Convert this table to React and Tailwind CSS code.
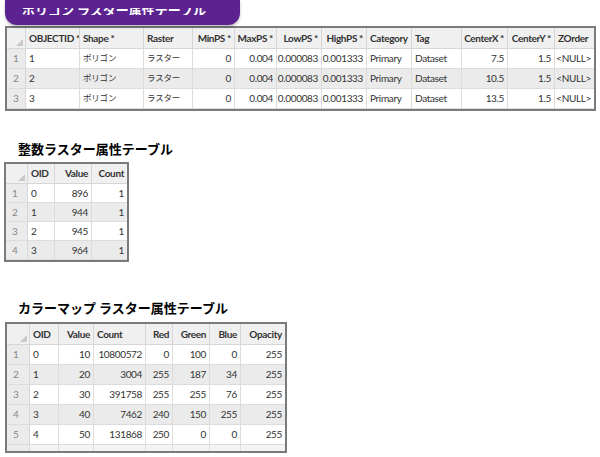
const isJa = (s) => /[^\x00-\x7f]/.test(s);

const Corner = () => (
  <div className="h-full w-full relative">
    <div className="absolute right-[2px] bottom-[2px] w-0 h-0 border-l-[7px] border-l-transparent border-b-[7px] border-b-[#c8c8c8]" />
  </div>
);

const Grid = ({ cols, rows, headH, rowH, partial }) => (
  <div className="inline-block border-2 border-[#7a7a7a] bg-white text-[10px] tracking-[-0.35px] text-[#333] font-['Lato','Noto_Sans_CJK_JP',sans-serif]">
    <div className={`flex bg-[#f0f0f0] border-b border-[#d6d6d6] ${headH}`}>
      <div className={`shrink-0 border-r border-[#d6d6d6] ${cols[0].w}`}>
        <Corner />
      </div>
      {cols.slice(1).map((c, i) => (
        <div
          key={i}
          className={`shrink-0 flex items-center px-[3px] font-bold whitespace-nowrap overflow-hidden border-r border-[#d6d6d6] last:border-r-0 ${c.w} ${c.r && !c.hl ? 'justify-end' : 'justify-start'}`}
        >
          {c.label}
        </div>
      ))}
    </div>
    {rows.map((row, ri) => (
      <div
        key={ri}
        className={`flex border-b border-[#dcdcdc] ${rowH} ${ri % 2 === 1 ? 'bg-[#ebebeb]' : 'bg-white'}`}
      >
        <div className={`shrink-0 flex items-center pl-[6px] bg-[#ebebeb] text-[#888] border-r border-[#d6d6d6] ${cols[0].w}`}>
          {ri + 1}
        </div>
        {row.map((v, ci) => (
          <div
            key={ci}
            className={`shrink-0 flex items-center px-[3px] whitespace-nowrap overflow-hidden border-r border-[#dcdcdc] last:border-r-0 ${cols[ci + 1].w} ${cols[ci + 1].r ? 'justify-end' : 'justify-start'}`}
          >
            {isJa(v) ? <span className="text-[8.5px] tracking-[-0.2px]">{v}</span> : v}
          </div>
        ))}
      </div>
    ))}
    {partial && (
      <div className="flex bg-[#f4f4f4] h-[6px]">
        {cols.map((c, i) => (
          <div key={i} className={`shrink-0 border-r border-[#dcdcdc] last:border-r-0 ${c.w} ${i === 0 ? 'bg-[#ebebeb]' : ''}`} />
        ))}
      </div>
    )}
  </div>
);

const polyCols = [
  { w: 'w-[19px]' },
  { w: 'w-[54px]', label: 'OBJECTID *' },
  { w: 'w-[64px]', label: 'Shape *' },
  { w: 'w-[49px]', label: 'Raster' },
  { w: 'w-[42px]', label: 'MinPS *', r: true },
  { w: 'w-[42px]', label: 'MaxPS *', r: true },
  { w: 'w-[45px]', label: 'LowPS *', r: true },
  { w: 'w-[45px]', label: 'HighPS *', r: true },
  { w: 'w-[45px]', label: 'Category' },
  { w: 'w-[50px]', label: 'Tag' },
  { w: 'w-[46px]', label: 'CenterX *', r: true },
  { w: 'w-[47px]', label: 'CenterY *', r: true },
  { w: 'w-[39px]', label: 'ZOrder', r: true, hl: true },
];

const polyRows = [
  ['1', 'ポリゴン', 'ラスター', '0', '0.004', '0.000083', '0.001333', 'Primary', 'Dataset', '7.5', '1.5', '<NULL>'],
  ['2', 'ポリゴン', 'ラスター', '0', '0.004', '0.000083', '0.001333', 'Primary', 'Dataset', '10.5', '1.5', '<NULL>'],
  ['3', 'ポリゴン', 'ラスター', '0', '0.004', '0.000083', '0.001333', 'Primary', 'Dataset', '13.5', '1.5', '<NULL>'],
];

const intCols = [
  { w: 'w-[22px]' },
  { w: 'w-[27px]', label: 'OID' },
  { w: 'w-[37px]', label: 'Value', r: true },
  { w: 'w-[35px]', label: 'Count', r: true },
];

const intRows = [
  ['0', '896', '1'],
  ['1', '944', '1'],
  ['2', '945', '1'],
  ['3', '964', '1'],
];

const cmapCols = [
  { w: 'w-[23px]' },
  { w: 'w-[29px]', label: 'OID' },
  { w: 'w-[35px]', label: 'Value', r: true },
  { w: 'w-[52px]', label: 'Count', r: true, hl: true },
  { w: 'w-[27px]', label: 'Red', r: true },
  { w: 'w-[37px]', label: 'Green', r: true },
  { w: 'w-[31px]', label: 'Blue', r: true },
  { w: 'w-[44px]', label: 'Opacity', r: true },
];

const cmapRows = [
  ['0', '10', '10800572', '0', '100', '0', '255'],
  ['1', '20', '3004', '255', '187', '34', '255'],
  ['2', '30', '391758', '255', '255', '76', '255'],
  ['3', '40', '7462', '240', '150', '255', '255'],
  ['4', '50', '131868', '250', '0', '0', '255'],
];

const Title = ({ children, className }) => (
  <h2 className={`text-[13px] font-bold text-black leading-none font-['Noto_Sans_CJK_JP',sans-serif] ${className}`}>
    {children}
  </h2>
);

export default function App() {
  return (
    <main className="w-[600px] h-[457px] bg-white overflow-hidden relative">
      <div className="absolute left-[5px] top-0 w-[235px] h-[25px] bg-[#5c2390] rounded-b-[12px] shadow-[0_2px_3px_rgba(0,0,0,0.25)] z-10 overflow-hidden">
        <div className="mt-[8px] ml-[17px] h-[7px] overflow-hidden">
          <div className="text-[13px] leading-[13px] text-white font-bold whitespace-nowrap -mt-[5px] font-['Noto_Sans_CJK_JP',sans-serif]">
            ポリゴン ラスター属性テーブル
          </div>
        </div>
      </div>

      <div className="pl-[5px] pt-[26px]">
        <Grid cols={polyCols} rows={polyRows} headH="h-[21px]" rowH="h-[20px]" />
      </div>

      <Title className="ml-[18px] mt-[31px]">整数ラスター属性テーブル</Title>
      <div className="pl-[4px] mt-[7px]">
        <Grid cols={intCols} rows={intRows} headH="h-[20px]" rowH="h-[19px]" />
      </div>

      <Title className="ml-[18px] mt-[39px]">カラーマップ ラスター属性テーブル</Title>
      <div className="pl-[5px] mt-[8px]">
        <Grid cols={cmapCols} rows={cmapRows} headH="h-[21px]" rowH="h-[20px]" partial />
      </div>
    </main>
  );
}
